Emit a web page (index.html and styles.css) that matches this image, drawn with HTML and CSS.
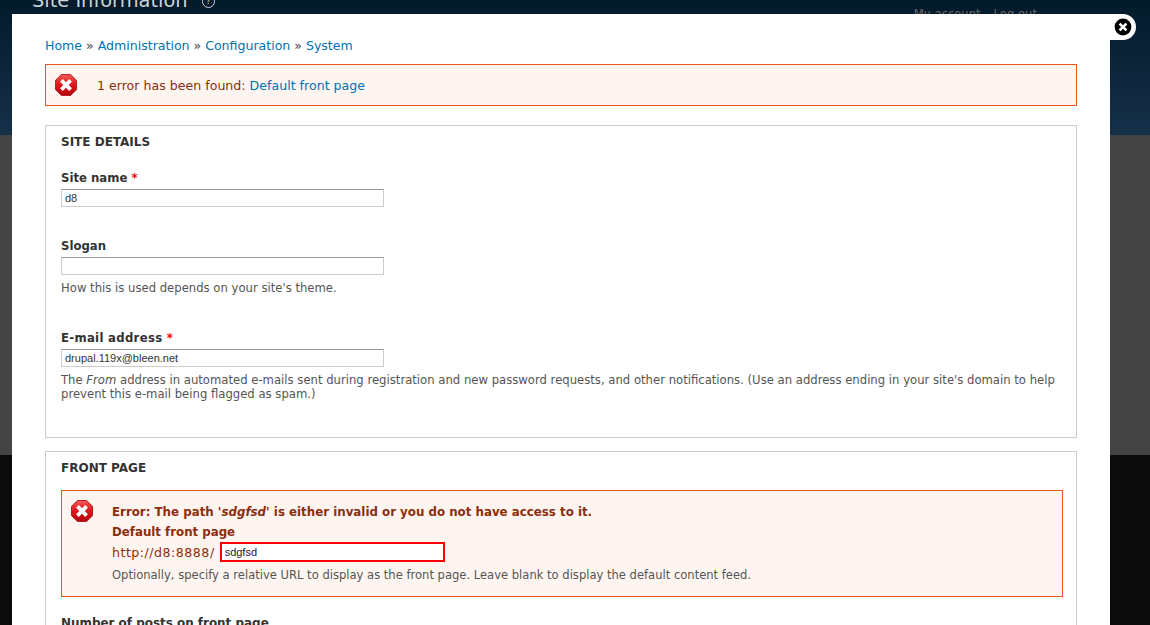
FILE: index.html
```html
<!DOCTYPE html>
<html lang="en">
<head>
<meta charset="utf-8">
<title>Site information</title>
<link rel="stylesheet" href="styles.css">
</head>
<body>
<div class="backdrop">
  <header class="band-head">
    <h1 class="page-title">Site Information <span class="help">?</span></h1>
    <nav class="user-links"><span>My account</span><span>Log out</span></nav>
  </header>
  <div class="band-mid"></div>
  <div class="band-low"></div>
</div>

<main class="modal">
  <nav class="crumbs"><a href="#">Home</a> » <a href="#">Administration</a> » <a href="#">Configuration</a> » <a href="#">System</a></nav>

  <div class="msg msg-top">
    <svg class="err-icon" viewBox="0 0 24 24"><use href="#err"/></svg>
    <p class="msg-text">1 error has been found: <a href="#">Default front page</a></p>
  </div>

  <section class="fieldset fs-details">
    <h2 class="legend">SITE DETAILS</h2>
    <div class="field f-name">
      <label class="lbl">Site name <em class="req">*</em></label>
      <input class="txt" value="d8">
    </div>
    <div class="field f-slogan">
      <label class="lbl">Slogan</label>
      <input class="txt" value="">
      <p class="desc desc-wide">How this is used depends on your site's theme.</p>
    </div>
    <div class="field f-email">
      <label class="lbl lbl-email">E-mail address <em class="req">*</em></label>
      <input class="txt" value="drupal.119x@bleen.net">
      <p class="desc desc-wide">The <i>From</i> address in automated e-mails sent during registration and new password requests, and other notifications. (Use an address ending in your site's domain to help prevent this e-mail being flagged as spam.)</p>
    </div>
  </section>

  <section class="fieldset fs-front">
    <h2 class="legend">FRONT PAGE</h2>
    <div class="msg msg-field">
      <svg class="err-icon" viewBox="0 0 24 24"><use href="#err"/></svg>
      <div class="msg-body">
        <p class="err-line">Error: The path '<i>sdgfsd</i>' is either invalid or you do not have access to it.</p>
        <label class="lbl lbl-err">Default front page</label>
        <div class="url-row"><span>http://d8:8888/</span><input class="txt txt-err" value="sdgfsd"></div>
        <p class="desc">Optionally, specify a relative URL to display as the front page. Leave blank to display the default content feed.</p>
      </div>
    </div>
    <label class="lbl lbl-posts">Number of posts on front page</label>
  </section>
</main>

<div class="close-tab">
  <svg class="close-icon" viewBox="0 0 18 18">
    <circle cx="9" cy="9" r="8.4" fill="#000"/>
    <path d="M5.6 5.6 12.4 12.4M12.4 5.6 5.6 12.4" stroke="#fff" stroke-width="2.6" fill="none"/>
  </svg>
</div>

<svg class="defs" width="0" height="0">
  <defs>
    <linearGradient id="errfill" x1="0" y1="0" x2="0" y2="1">
      <stop offset="0" stop-color="#f25a5a"/>
      <stop offset="0.45" stop-color="#e01a1e"/>
      <stop offset="1" stop-color="#b4000a"/>
    </linearGradient>
    <g id="err">
      <polygon points="7,0.5 17,0.5 23.5,7 23.5,17 17,23.5 7,23.5 0.5,17 0.5,7" fill="url(#errfill)" stroke="#b3101a" stroke-width="1" stroke-linejoin="round"/>
      <path d="M7 7 17 17M17 7 7 17" stroke="#fff" stroke-width="4.2" fill="none"/>
    </g>
  </defs>
</svg>
</body>
</html>
```
FILE: styles.css
```css
* { box-sizing: border-box; }
html, body { margin: 0; height: 100%; overflow: hidden; }
body { font-family: "DejaVu Sans", "Liberation Sans", sans-serif; font-size: 12px; color: #444; background: #0b0b0b; }
.backdrop { display: flex; flex-direction: column; height: 625px; }
.band-head { height: 135px; background: linear-gradient(#021a2a, #16304a); display: flex; justify-content: space-between; align-items: flex-start; padding: 0 113px 0 32px; overflow: hidden; }
.page-title { margin: -11px 0 0; font-size: 19.4px; font-weight: normal; color: #ccd3d9; line-height: 24px; white-space: nowrap; }
.help { display: inline-block; width: 13px; height: 13px; border: 1px solid #ccd3d9; border-radius: 50%; font-size: 9px; line-height: 11px; text-align: center; margin-left: 8px; vertical-align: 3px; }
.user-links { display: flex; gap: 13px; font-size: 11.6px; color: #666; padding-top: 7px; }
.band-mid { height: 320px; background: #444; }
.band-low { flex: 1; background: #0b0b0b; }
.modal { position: absolute; left: 12px; top: 14px; width: 1098px; height: 611px; background: #fff; padding: 24px 33px 0; overflow: hidden; }
.close-tab { position: absolute; left: 1110px; top: 14px; width: 26px; height: 26px; background: #fff; border-radius: 0 13px 13px 0; }
.close-icon { position: absolute; left: 4px; top: 4px; width: 18px; height: 18px; display: block; }
.defs { position: absolute; }
a { color: #0071b3; text-decoration: none; }
.crumbs { font-size: 12.55px; line-height: 16px; height: 16px; margin-bottom: 10px; color: #444; }
.msg { border: 1px solid #ed541d; background: #fef5f1; display: flex; color: #8c2e0b; }
.msg-top { height: 42px; align-items: center; padding-left: 9px; margin-bottom: 19px; }
.err-icon { width: 22px; height: 22px; flex: none; display: block; }
.msg-text { margin: 0 0 0 20px; font-size: 12.6px; }
.fieldset { border: 1px solid #ccc; padding: 0 13px 0 15px; }
.fs-details { height: 313px; margin-bottom: 13px; }
.fs-front { height: 300px; }
.legend { margin: 0; font-size: 12px; font-weight: bold; color: #333; line-height: 16px; padding-top: 8px; }
.lbl { display: block; font-weight: bold; font-size: 11.7px; line-height: 16px; color: #333; }
.lbl-email { letter-spacing: 0.3px; }
.req { color: #e00; font-style: normal; }
.txt { display: block; width: 323px; height: 18px; border: 1px solid #ccc; border-top-color: #999; padding: 0 3px; font-family: "Liberation Sans", sans-serif; font-size: 11px; color: #333; background: #fff; border-radius: 0; outline: none; margin-top: 3px; }
.desc { margin: 6px 0 0; font-size: 11.55px; line-height: 14px; color: #555; }
.desc-wide { font-size: 11.65px; }
.f-name { margin-top: 20px; }
.f-slogan { margin-top: 31px; }
.f-email { margin-top: 35px; }
.msg-field { margin-top: 14px; height: 107px; padding: 9px 9px 0; }
.msg-body { margin-left: 19px; padding-top: 4px; }
.err-line { margin: 0 0 4px; font-weight: bold; font-size: 11.83px; line-height: 16px; color: #8c2e0b; }
.lbl-err { color: #8c2e0b; font-size: 11.8px; }
.url-row { display: flex; align-items: center; gap: 5px; font-size: 12.6px; letter-spacing: 0.5px; height: 18px; margin-top: 3px; color: #8c2e0b; }
.txt-err { width: 225px; height: 20px; border: 2px solid #f00; margin: 0; color: #223; letter-spacing: 0; }
.msg-body .desc { margin-top: 7px; }
.lbl-posts { margin-top: 18px; font-size: 11.95px; }
```
